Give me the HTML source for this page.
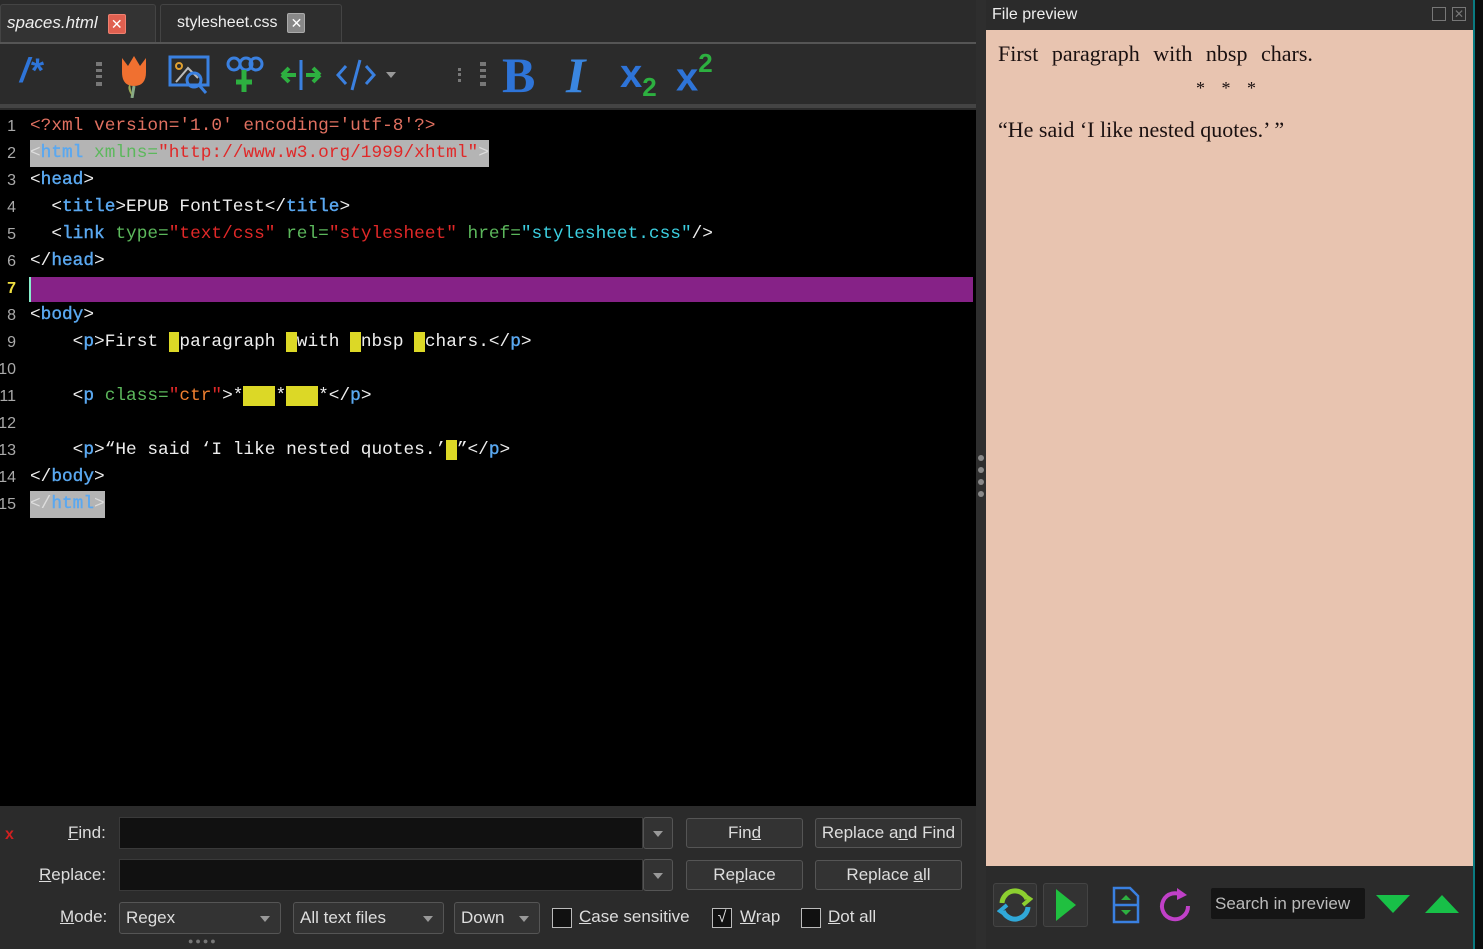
<!DOCTYPE html>
<html><head><meta charset="utf-8">
<style>
*{margin:0;padding:0;box-sizing:border-box}
body{width:1483px;height:949px;background:#2b2b2b;position:relative;overflow:hidden;font-family:"Liberation Sans","DejaVu Sans",sans-serif;color:#ddd}
.abs{position:absolute}
.tab{position:absolute;top:4px;height:38px;border:1px solid #444;border-bottom:none;border-radius:3px 3px 0 0;font-size:16px;line-height:36px;color:#eee}
.xb{display:inline-block;width:18px;height:20px;vertical-align:middle;text-align:center;line-height:19px;font-size:14px;color:#fff;border-radius:2px;margin-left:10px}
#ed{position:absolute;left:0;top:110px;width:976px;height:696px;background:#000}
.ln{position:absolute;left:0;width:976px;height:27px;font-family:"Liberation Mono",monospace;font-size:17.8px;line-height:27px;white-space:pre;color:#eee}
.n{position:absolute;right:960px;color:#aaa;font-family:"Liberation Sans",sans-serif;font-size:16px}
.c{position:absolute;left:30px}
.t{color:#5aa8f0;-webkit-text-stroke:0.4px #5aa8f0}.a{color:#5cb85c}.s{color:#e02828}.x{color:#e07060}.cy{color:#3ccfe0}.o{color:#f08030}
.y{background:#dcd826}
.btn{position:absolute;height:30px;border:1px solid #555;border-radius:3px;background:#333;color:#ddd;font-size:17px;text-align:center;line-height:28px}
.inp{position:absolute;height:32px;background:#111;border:1px solid #3a3a3a}
.lbl{position:absolute;font-size:17px;color:#ddd}
.cb{position:absolute;width:20px;height:20px;border:1px solid #bbb;background:#111}
.dd{position:absolute;height:32px;border:1px solid #555;border-radius:3px;background:#333;font-size:17px;line-height:30px;padding-left:6px;color:#ddd}
.dd:after{content:"";position:absolute;right:10px;top:13px;border:5px solid transparent;border-top:6px solid #999}
</style></head><body>
<div class="tab" style="left:0;width:156px;background:#333;padding-left:6px;font-size:17px"><i>spaces.html</i><span class="xb" style="background:#e06050;border:1px solid #f08070">✕</span></div>
<div class="tab" style="left:160px;width:182px;background:#2e2e2e;padding-left:16px">stylesheet.css<span class="xb" style="background:#888;border:1px solid #aaa">✕</span></div>
<div class="abs" style="left:0;top:42px;width:976px;height:2px;background:#555"></div>
<div class="abs" style="left:0;top:44px;width:976px;height:62px;background:#2b2b2b"></div>
<div class="abs" style="left:20px;top:52px;font-size:34px;font-weight:bold;font-style:italic;color:#2e74d8">/*</div>
<div class="abs" style="left:96px;top:62px;width:6px;height:24px;border-left:3px dotted #777;border-right:3px dotted #777"></div>
<svg class="abs" style="left:116px;top:54px" width="36" height="44"><path d="M6 4 L12 12 L18 2 L24 12 L30 4 L30 18 Q30 32 18 32 Q6 32 6 18Z" fill="#f07030"/><path d="M18 32 L16 44" stroke="#8a8" stroke-width="3"/><path d="M16 42 Q10 34 14 30" fill="#9a5" /></svg>
<svg class="abs" style="left:168px;top:54px" width="44" height="42" fill="none" stroke="#3a80e0" stroke-width="3"><rect x="2" y="3" width="38" height="28"/><circle cx="11" cy="12" r="3" stroke="#e0a030" stroke-width="2"/><path d="M8 28 L20 14 L30 24" stroke="#bbb" stroke-width="2"/><circle cx="26" cy="26" r="7"/><path d="M31 31 L38 39"/></svg>
<svg class="abs" style="left:224px;top:56px" width="42" height="38"><g fill="none" stroke="#3a80e0" stroke-width="3"><circle cx="10" cy="8" r="6"/><circle cx="22" cy="8" r="6"/><circle cx="32" cy="8" r="6"/></g><path d="M20 14 V36 M12 26 H28" stroke="#2db040" stroke-width="5"/></svg>
<svg class="abs" style="left:280px;top:60px" width="42" height="30"><path d="M21 0 V30" stroke="#3a80e0" stroke-width="3"/><path d="M2 15 H16 M2 15 L9 8 M2 15 L9 22 M40 15 H26 M40 15 L33 8 M40 15 L33 22" stroke="#2db040" stroke-width="4" fill="none"/></svg>
<svg class="abs" style="left:336px;top:58px" width="40" height="34" fill="none" stroke="#3a80e0" stroke-width="3"><path d="M10 8 L2 17 L10 26 M30 8 L38 17 L30 26 M24 2 L16 32"/></svg>
<div class="abs" style="left:386px;top:72px;border:5px solid transparent;border-top:6px solid #999"></div>
<div class="abs" style="left:458px;top:68px;width:3px;height:14px;border-left:3px dotted #777"></div>
<div class="abs" style="left:480px;top:62px;width:6px;height:24px;border-left:3px dotted #777;border-right:3px dotted #777"></div>
<div class="abs" style="left:502px;top:46px;font-family:'Liberation Serif',serif;font-size:50px;font-weight:bold;color:#2e74d8">B</div>
<div class="abs" style="left:566px;top:46px;font-family:'Liberation Serif',serif;font-size:50px;font-style:italic;font-weight:bold;color:#3a86e0">I</div>
<div class="abs" style="left:620px;top:52px;font-size:40px;font-weight:bold;color:#2e74d8">x<sub style="font-size:26px;color:#2db040">2</sub></div>
<div class="abs" style="left:676px;top:52px;font-size:40px;font-weight:bold;color:#2e74d8">x<sup style="font-size:26px;color:#2db040;position:relative;top:-4px">2</sup></div>
<div class="abs" style="left:0;top:104px;width:976px;height:4px;background:#444"></div>
<div id="ed">
<div class="ln" style="top:3px"><span class="n">1</span><span class="c x">&lt;?xml version='1.0' encoding='utf-8'?&gt;</span></div>
<div class="ln" style="top:30px"><span class="n">2</span><span class="c" style="background:#b4b4b4;height:27px"><span style="color:#ddd">&lt;</span><span class="t">html</span> <span class="a">xmlns=</span><span class="s">"http://www.w3.org/1999/xhtml"</span><span style="color:#ddd">&gt;</span></span></div>
<div class="ln" style="top:57px"><span class="n">3</span><span class="c">&lt;<span class="t">head</span>&gt;</span></div>
<div class="ln" style="top:84px"><span class="n">4</span><span class="c">  &lt;<span class="t">title</span>&gt;EPUB FontTest&lt;/<span class="t">title</span>&gt;</span></div>
<div class="ln" style="top:111px"><span class="n">5</span><span class="c">  &lt;<span class="t">link</span> <span class="a">type=</span><span class="s">"text/css"</span> <span class="a">rel=</span><span class="s">"stylesheet"</span> <span class="a">href=</span><span class="cy">"stylesheet.css"</span>/&gt;</span></div>
<div class="ln" style="top:138px"><span class="n">6</span><span class="c">&lt;/<span class="t">head</span>&gt;</span></div>
<div class="ln" style="top:165px"><span class="n" style="color:#f0e040;font-weight:bold">7</span><span class="abs" style="left:29px;top:2px;width:944px;height:25px;background:#862287;border-left:2px solid #8ec"></span></div>
<div class="ln" style="top:192px"><span class="n">8</span><span class="c">&lt;<span class="t">body</span>&gt;</span></div>
<div class="ln" style="top:219px"><span class="n">9</span><span class="c">    &lt;<span class="t">p</span>&gt;First <span class="y"> </span>paragraph <span class="y"> </span>with <span class="y"> </span>nbsp <span class="y"> </span>chars.&lt;/<span class="t">p</span>&gt;</span></div>
<div class="ln" style="top:246px"><span class="n">10</span></div>
<div class="ln" style="top:273px"><span class="n">11</span><span class="c">    &lt;<span class="t">p</span> <span class="a">class=</span><span class="s">"</span><span class="o">ctr</span><span class="s">"</span>&gt;*<span class="y">   </span>*<span class="y">   </span>*&lt;/<span class="t">p</span>&gt;</span></div>
<div class="ln" style="top:300px"><span class="n">12</span></div>
<div class="ln" style="top:327px"><span class="n">13</span><span class="c">    &lt;<span class="t">p</span>&gt;“He said ‘I like nested quotes.’<span class="y"> </span>”&lt;/<span class="t">p</span>&gt;</span></div>
<div class="ln" style="top:354px"><span class="n">14</span><span class="c">&lt;/<span class="t">body</span>&gt;</span></div>
<div class="ln" style="top:381px"><span class="n">15</span><span class="c" style="background:#b4b4b4"><span style="color:#ddd">&lt;/</span><span class="t">html</span><span style="color:#ddd">&gt;</span></span></div>
</div>
<div class="abs" style="left:5px;top:826px;color:#d02020;font-weight:bold;font-size:16px">x</div>
<div class="lbl" style="left:68px;top:823px"><u>F</u>ind:</div>
<div class="lbl" style="left:39px;top:865px"><u>R</u>eplace:</div>
<div class="lbl" style="left:60px;top:907px"><u>M</u>ode:</div>
<div class="inp" style="left:119px;top:817px;width:524px"></div>
<div class="btn" style="left:643px;top:817px;width:30px;height:32px"><span class="abs" style="left:9px;top:13px;border:5px solid transparent;border-top:6px solid #999"></span></div>
<div class="inp" style="left:119px;top:859px;width:524px"></div>
<div class="btn" style="left:643px;top:859px;width:30px;height:32px"><span class="abs" style="left:9px;top:13px;border:5px solid transparent;border-top:6px solid #999"></span></div>
<div class="btn" style="left:686px;top:818px;width:117px">Fin<u>d</u></div>
<div class="btn" style="left:815px;top:818px;width:147px">Replace a<u>n</u>d Find</div>
<div class="btn" style="left:686px;top:860px;width:117px">Re<u>p</u>lace</div>
<div class="btn" style="left:815px;top:860px;width:147px">Replace <u>a</u>ll</div>
<div class="dd" style="left:119px;top:902px;width:162px">Regex</div>
<div class="dd" style="left:293px;top:902px;width:151px">All text files</div>
<div class="dd" style="left:454px;top:902px;width:86px">Down</div>
<div class="abs" style="left:188px;top:936px;color:#777;font-size:9px;letter-spacing:2px">●●●●</div>
<div class="cb" style="left:552px;top:908px"></div><div class="lbl" style="left:579px;top:907px"><u>C</u>ase sensitive</div>
<div class="cb" style="left:712px;top:908px;color:#ddd;font-size:16px;line-height:18px;text-align:center">√</div><div class="lbl" style="left:740px;top:907px"><u>W</u>rap</div>
<div class="cb" style="left:801px;top:908px"></div><div class="lbl" style="left:828px;top:907px"><u>D</u>ot all</div>
<div class="abs" style="left:976px;top:0;width:10px;height:949px;background:#2e2e2e"></div>
<div class="abs" style="left:978px;top:455px;width:6px;height:6px;border-radius:3px;background:#888;box-shadow:0 12px #888,0 24px #888,0 36px #888"></div>
<div class="abs" style="left:992px;top:6px;font-size:16px;color:#eee">File preview</div>
<div class="abs" style="left:1432px;top:7px;width:14px;height:14px;border:1px solid #777"></div>
<div class="abs" style="left:1452px;top:7px;width:14px;height:14px;border:1px solid #777;color:#777;font-size:12px;line-height:12px;text-align:center">✕</div>
<div class="abs" style="left:1473px;top:0;width:10px;height:949px;background:#0d0d0d;border-left:2px solid #0a7a80"></div>
<div class="abs" style="left:986px;top:30px;width:487px;height:836px;background:#e8c4b0;font-family:'Liberation Serif',serif;font-size:22px;color:#1a1010">
<div class="abs" style="left:12px;top:11px;word-spacing:8px">First paragraph with nbsp chars.</div>
<div class="abs" style="left:210px;top:48px;font-size:18px;word-spacing:12px">* * *</div>
<div class="abs" style="left:12px;top:87px">“He said ‘I like nested quotes.’ ”</div>
</div>
<div class="abs" style="left:993px;top:883px;width:44px;height:44px;border:1px solid #444;border-radius:3px;background:#333"></div>
<svg class="abs" style="left:997px;top:887px" width="36" height="36" fill="none" stroke-width="5"><path d="M5 16 A13 13 0 0 1 30 12" stroke="#8ccf30"/><path d="M24 6 L33 12 L26 18" stroke="#8ccf30" stroke-width="4"/><path d="M31 20 A13 13 0 0 1 6 24" stroke="#30a8d8"/><path d="M12 30 L3 24 L10 18" stroke="#30a8d8" stroke-width="4"/></svg>
<div class="abs" style="left:1043px;top:883px;width:45px;height:44px;border:1px solid #444;border-radius:3px;background:#333"></div>
<svg class="abs" style="left:1054px;top:887px" width="24" height="36"><path d="M2 2 L22 18 L2 34Z" fill="#20c040"/></svg>
<svg class="abs" style="left:1112px;top:886px" width="28" height="38" fill="none" stroke="#3a80e0" stroke-width="2.5"><path d="M2 2 H18 L26 10 V36 H2Z M2 19 H26"/><path d="M9 14 L14 9 L19 14Z M9 24 L14 29 L19 24Z" fill="#2db040" stroke="none"/></svg>
<svg class="abs" style="left:1157px;top:886px" width="36" height="38" fill="none" stroke="#c040c8" stroke-width="4"><path d="M26 10 A13 13 0 1 0 31 20"/><path d="M20 2 L30 9 L20 14Z" fill="#c040c8" stroke="none"/></svg>
<div class="abs" style="left:1211px;top:888px;width:154px;height:31px;background:#151515;border-radius:2px;color:#bbb;font-size:17px;line-height:31px;padding-left:4px">Search in preview</div>
<svg class="abs" style="left:1375px;top:893px" width="36" height="22"><path d="M1 2 H35 L18 20Z" fill="#18c048"/></svg>
<svg class="abs" style="left:1424px;top:893px" width="36" height="22"><path d="M1 20 H35 L18 2Z" fill="#18c048"/></svg>
</body></html>
